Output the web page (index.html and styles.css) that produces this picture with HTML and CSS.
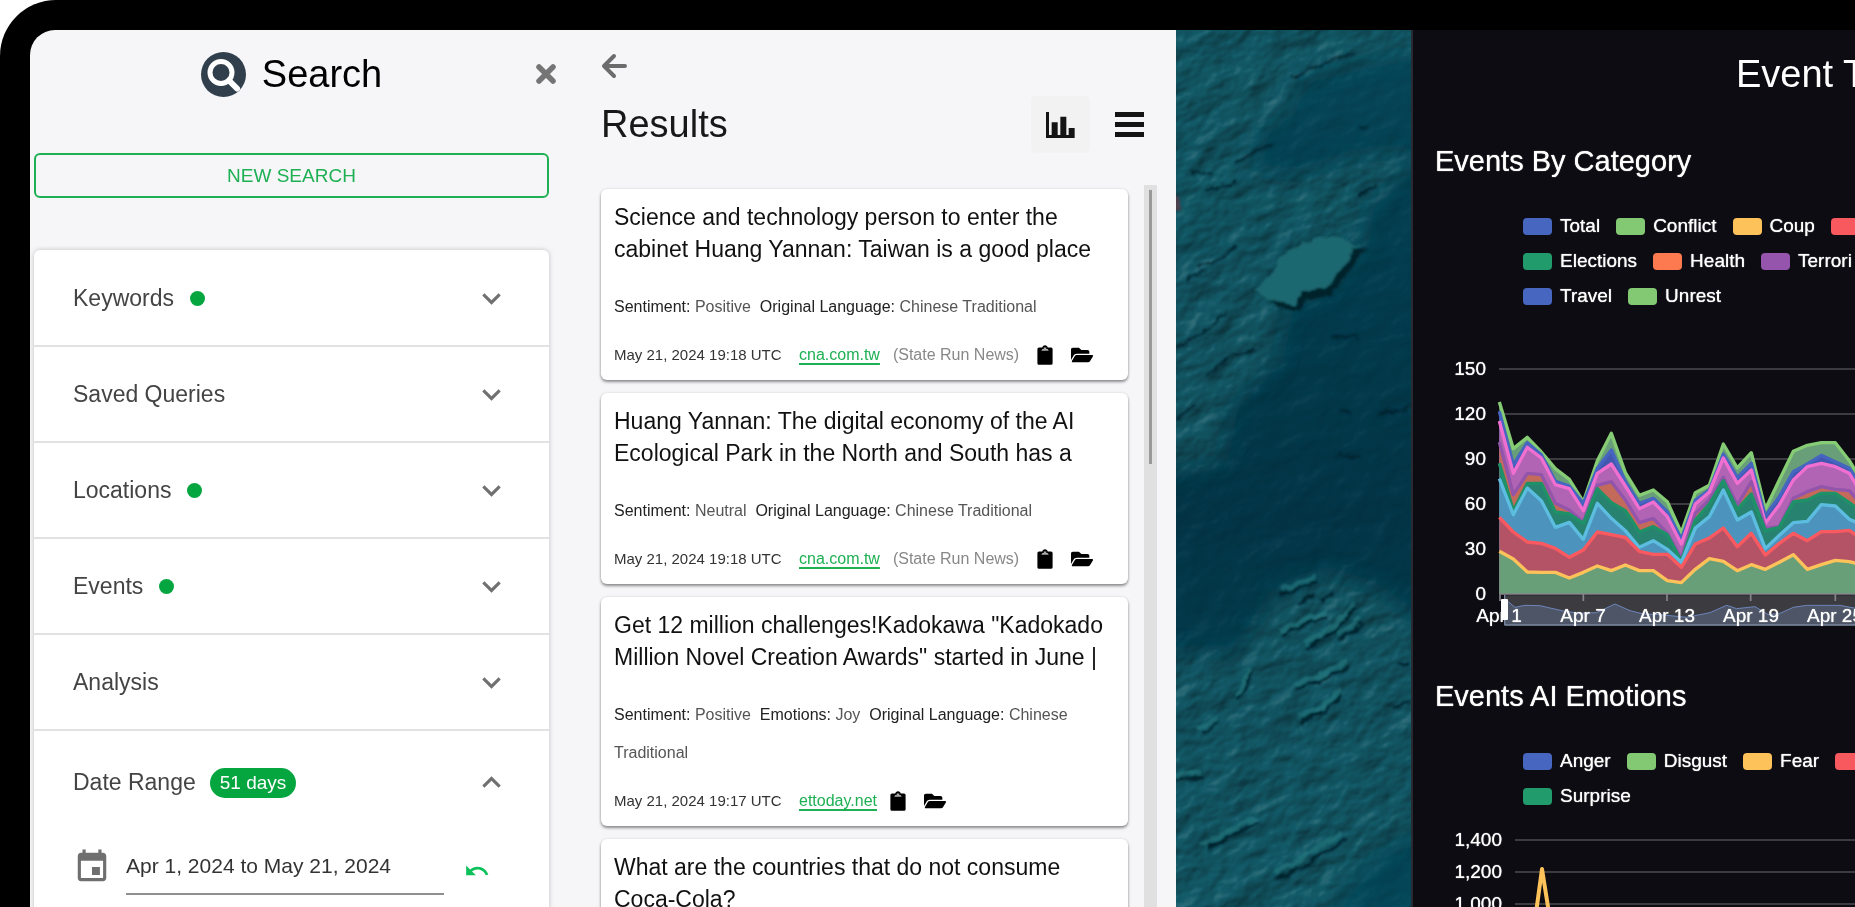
FILE: index.html
```html
<!DOCTYPE html>
<html lang="en">
<head>
<meta charset="utf-8">
<title>Event Search</title>
<link rel="stylesheet" href="styles.css">
</head>
<body>
<svg class="sprite" aria-hidden="true">
  <symbol id="i-down" viewBox="0 0 24 24"><path d="M7.41 8.59 12 13.17l4.59-4.58L18 10l-6 6-6-6z"/></symbol>
  <symbol id="i-up" viewBox="0 0 24 24"><path d="M7.41 15.41 12 10.83l4.59 4.58L18 14l-6-6-6 6z"/></symbol>
  <symbol id="i-clip" viewBox="0 0 16 20"><path d="M2 2.500H5.200C5.500 1.200 6.500 .2 8 .2s2.500 1 2.800 2.300H14a1.600 1.600 0 0 1 1.600 1.600v14.100A1.600 1.600 0 0 1 14 19.800H2A1.600 1.600 0 0 1 .4 18.200V4.100A1.600 1.600 0 0 1 2 2.500z"/><path d="M4.200 5.800h7.600L10.600 4H9.300V2.600H6.700V4H5.400z" fill="#aaa"/></symbol>
  <symbol id="i-folder" viewBox="0 0 576 512"><path d="M572.694 292.093L500.27 416.248A63.997 63.997 0 0 1 444.989 448H45.025c-18.523 0-30.064-20.093-20.731-36.093l72.424-124.155A64 64 0 0 1 152 256h399.964c18.523 0 30.064 20.093 20.73 36.093zM152 224h328v-48c0-26.51-21.49-48-48-48H272l-64-64H48C21.49 64 0 85.49 0 112v278.046l69.077-118.418C86.214 242.25 117.989 224 152 224z"/></symbol>
</svg>
<div class="device">
<main class="screen">

<section class="search">
  <header class="search__header">
    <h1 class="search__title">
      <svg class="search__logo" viewBox="0 0 45 45" aria-hidden="true"><circle cx="22.500" cy="22.500" r="22.500" fill="#313f4c"/><circle cx="20" cy="20.500" r="11" fill="none" stroke="#fff" stroke-width="5"/><path d="M28 28.500 36 36.500" stroke="#fff" stroke-width="6" stroke-linecap="round"/></svg>
      Search
    </h1>
    <button class="icon-button search__close" aria-label="Close"><svg width="20" height="20" viewBox="0 0 20 20"><path d="M3 3 17 17M17 3 3 17" stroke="#757575" stroke-width="5.500" stroke-linecap="round"/></svg></button>
  </header>
  <button class="search__new">NEW SEARCH</button>
  <div class="accordion">
    <button class="accordion__row">Keywords<span class="dot"></span><svg class="accordion__chevron"><use href="#i-down"/></svg></button>
    <button class="accordion__row">Saved Queries<svg class="accordion__chevron"><use href="#i-down"/></svg></button>
    <button class="accordion__row">Locations<span class="dot"></span><svg class="accordion__chevron"><use href="#i-down"/></svg></button>
    <button class="accordion__row">Events<span class="dot"></span><svg class="accordion__chevron"><use href="#i-down"/></svg></button>
    <button class="accordion__row">Analysis<svg class="accordion__chevron"><use href="#i-down"/></svg></button>
    <button class="accordion__row accordion__row--open" aria-expanded="true">Date Range<span class="badge">51 days</span><svg class="accordion__chevron"><use href="#i-up"/></svg></button>
    <div class="dates">
      <svg class="dates__icon" viewBox="0 0 24 24" aria-hidden="true"><path d="M17 12h-5v5h5v-5zM16 1v2H8V1H6v2H5c-1.110 0-1.990.9-1.990 2L3 19c0 1.100.89 2 2 2h14c1.100 0 2-.9 2-2V5c0-1.100-.9-2-2-2h-1V1h-2zm3 18H5V8h14v11z"/></svg>
      <input class="dates__input" type="text" aria-label="Date range" value="Apr 1, 2024 to May 21, 2024">
      <button class="icon-button dates__undo" aria-label="Reset dates"><svg width="26" height="26" viewBox="0 0 24 24"><path d="M12.500 8c-2.650 0-5.050.99-6.900 2.600L2 7v9h9l-3.620-3.620c1.390-1.160 3.160-1.880 5.120-1.880 3.540 0 6.550 2.310 7.600 5.500l2.370-.78C21.080 11.030 17.150 8 12.500 8z" fill="#0cc05a"/></svg></button>
    </div>
  </div>
</section>

<section class="results">
  <button class="icon-button results__back" aria-label="Back"><svg width="26" height="26" viewBox="0 0 26 26"><path d="M13 3 3 13 13 23M4 13H24" fill="none" stroke="#6c6c6c" stroke-width="4" stroke-linecap="round" stroke-linejoin="round"/></svg></button>
  <header class="results__header">
    <h2 class="results__title">Results</h2>
    <button class="results__chart" aria-label="Charts"><svg width="29" height="26" viewBox="0 0 87 78"><path d="M0 0H9V69H17V31H35V69H43V14H61V69H68V48H86V78H0z" fill="#141414"/></svg></button>
    <button class="icon-button" aria-label="Menu"><svg width="29" height="26" viewBox="0 0 29 26"><path d="M0 0H29V5H0zM0 10H29V15H0zM0 20H29V25H0z" fill="#141414"/></svg></button>
  </header>
  <div class="results__body">
    <div class="cards">
      <article class="card">
        <h3 class="card__title">Science and technology person to enter the cabinet Huang Yannan: Taiwan is a good place</h3>
        <p class="card__meta"><b>Sentiment:</b> Positive &nbsp;<b>Original Language:</b> Chinese Traditional</p>
        <footer class="card__footer"><time class="card__date">May 21, 2024 19:18 UTC</time><a class="card__link" href="#">cna.com.tw</a><span class="card__note">(State Run News)</span><button class="icon-button" aria-label="Copy"><svg class="clip"><use href="#i-clip"/></svg></button><button class="icon-button" aria-label="Open folder"><svg class="folder"><use href="#i-folder"/></svg></button></footer>
      </article>
      <article class="card">
        <h3 class="card__title">Huang Yannan: The digital economy of the AI Ecological Park in the North and South has a</h3>
        <p class="card__meta"><b>Sentiment:</b> Neutral &nbsp;<b>Original Language:</b> Chinese Traditional</p>
        <footer class="card__footer"><time class="card__date">May 21, 2024 19:18 UTC</time><a class="card__link" href="#">cna.com.tw</a><span class="card__note">(State Run News)</span><button class="icon-button" aria-label="Copy"><svg class="clip"><use href="#i-clip"/></svg></button><button class="icon-button" aria-label="Open folder"><svg class="folder"><use href="#i-folder"/></svg></button></footer>
      </article>
      <article class="card">
        <h3 class="card__title">Get 12 million challenges!Kadokawa "Kadokado Million Novel Creation Awards" started in June |</h3>
        <p class="card__meta"><b>Sentiment:</b> Positive &nbsp;<b>Emotions:</b> Joy &nbsp;<b>Original Language:</b> Chinese Traditional</p>
        <footer class="card__footer"><time class="card__date">May 21, 2024 19:17 UTC</time><a class="card__link" href="#">ettoday.net</a><button class="icon-button" aria-label="Copy"><svg class="clip"><use href="#i-clip"/></svg></button><button class="icon-button" aria-label="Open folder"><svg class="folder"><use href="#i-folder"/></svg></button></footer>
      </article>
      <article class="card">
        <h3 class="card__title">What are the countries that do not consume Coca-Cola?</h3>
      </article>
    </div>
    <div class="scrollbar"><div class="scrollbar__thumb"></div></div>
  </div>
</section>

<section class="map" aria-label="Map">
  <svg class="map__terrain" viewBox="0 0 234 877" preserveAspectRatio="xMidYMin slice">
    <defs>
      <filter id="soft" x="-20%" y="-20%" width="140%" height="140%"><feGaussianBlur stdDeviation="11"/></filter>
      <filter id="edge" x="-20%" y="-20%" width="140%" height="140%"><feTurbulence type="fractalNoise" baseFrequency=".08" numOctaves="3" seed="4"/><feDisplacementMap in="SourceGraphic" scale="9" xChannelSelector="R" yChannelSelector="G"/><feGaussianBlur stdDeviation="1"/></filter>
      <filter id="relief" x="0" y="0" width="100%" height="100%" color-interpolation-filters="sRGB">
        <feTurbulence type="fractalNoise" baseFrequency=".028 .042" numOctaves="4" seed="11"/>
        <feColorMatrix values="0 0 0 0 0  0 0 0 0 0  0 0 0 0 0  1 0 0 0 0"/>
        <feGaussianBlur stdDeviation=".8"/>
        <feDiffuseLighting surfaceScale="3" diffuseConstant=".6" lighting-color="#fff"><feDistantLight azimuth="250" elevation="50"/></feDiffuseLighting>
      </filter>
      <linearGradient id="sea" x1="0" y1="0" x2="0" y2="1"><stop offset="0" stop-color="#06485a"/><stop offset=".3" stop-color="#023c4e"/><stop offset=".55" stop-color="#023547"/><stop offset="1" stop-color="#04485a"/></linearGradient>
      <g id="shelf">
        <path d="M-30-30H270V15L130 45 110 85 85 100 78 140 120 145 180 125 240 120 225 145 190 175 185 215 155 255 110 275 100 330 55 375 45 430-30 445z"/>
        <path d="M-30 620 60 620 100 560 150 540 205 560 235 585 270 600V790L200 820 130 910H-30z"/>
      </g>
      <mask id="shelfMask" maskUnits="userSpaceOnUse" x="0" y="0" width="234" height="877"><rect width="234" height="877" fill="#444"/><use href="#shelf" fill="#fff" filter="url(#soft)"/></mask>
    </defs>
    <rect width="234" height="877" fill="url(#sea)"/>
    <use href="#shelf" fill="#125f6c" opacity=".8" filter="url(#soft)"/>
    <g class="map__relief" mask="url(#shelfMask)"><rect x="-500" y="-300" width="1200" height="1500" transform="rotate(-24 117 438)" filter="url(#relief)"/></g>
    <ellipse cx="1" cy="172" rx="4" ry="7" fill="#8b2d3a" opacity=".5" filter="url(#edge)"/>
    <g filter="url(#edge)">
      <path d="M84 264 100 274 123 280 130 267 153 264 170 244 188 216 180 217z" fill="#00222c"/>
      <path d="M78 260 97 240 108 220 130 210 160 205 178 215 183 212 165 238 150 258 125 261 118 274 95 270z" fill="#1d6871"/>
      <g fill="none" stroke="#267f86" stroke-width="5" opacity=".6">
        <path d="M103 558Q118 551 138 544M103 598Q125 588 148 580M130 610 158 592 178 570M160 601Q175 598 183 584M120 652 170 630M123 684 148 672 164 656M60 662 74 636M22 694 43 684M0 742 26 739M25 812 78 785M98 840 165 800"/>
      </g>
      <g fill="none" stroke="#00222d" stroke-width="3">
        <path d="M103 563Q118 556 140 549M120 572 138 562M145 568 158 560M103 603Q125 593 150 585M130 616 158 598 180 575M160 607Q175 604 185 590M120 657 172 635M123 690 148 678 166 661M62 668 76 640M25 700 45 689M0 748 28 744M30 815 80 790M100 846 170 806M215 675 232 668M222 630 234 630"/>
        <path d="M115 48 135 38 180 22M180 98 192 97M160 422 183 427M165 378 175 382M200 382 225 378 234 372M15 140 35 142M0 388 20 372M155 305 180 306M30 160 60 150M20 235 45 228 60 215M10 250 28 240M180 165 200 155M60 132 95 112M0 315 30 300 50 280M30 345 55 325 80 318" stroke-width="2"/>
      </g>
    </g>
  </svg>
</section>

<section class="trends">
  <h2 class="trends__title">Event T</h2>

  <h3 class="trends__heading">Events By Category</h3>
  <ul class="legend">
    <li class="legend__row"><span class="key key--blue">Total</span><span class="key key--green">Conflict</span><span class="key key--yellow">Coup</span><span class="key key--red"></span></li>
    <li class="legend__row"><span class="key key--teal">Elections</span><span class="key key--orange">Health</span><span class="key key--purple">Terrori</span></li>
    <li class="legend__row"><span class="key key--blue">Travel</span><span class="key key--green">Unrest</span></li>
  </ul>
  <svg class="chart" height="327" role="img" aria-label="Events by category, stacked by day">
    <g stroke="#3b3b40" stroke-width="2"><path d="M86 64H900M86 109H900M86 154H900M86 199H900M86 244H900"/></g>
    <g transform="translate(-13 35) scale(.33333)" stroke-width="10" stroke-linejoin="round">
      <path d="M314 766H1500V856H314z" fill="#3c3c40"/>
      <path d="M314 856V776L345 802 375 796 420 797 450 804 490 813 540 820 590 818 645 792 690 812 730 822 780 824 860 832 930 818 980 796 1010 806 1065 800 1105 824 1140 820 1180 802 1220 796 1320 796 1350 802 1400 810V856z" fill="#4d5566" stroke="none"/>
      <path d="M314 776 345 802 375 796 420 797 450 804 490 813 540 820 590 818 645 792 690 812 730 822 780 824 860 832 930 818 980 796 1010 806 1065 800 1105 824 1140 820 1180 802 1220 796 1320 796 1350 802 1400 810" fill="none" stroke="#6d86bd" stroke-width="3"/>
      <path d="M314 855H1500M314 764V856" fill="none" stroke="#78869f" stroke-width="4"/>
      <g id="bands"></g>
      <path d="M298 762H1500M300 762V783M550 762V783M801 762V783M1052 762V783M1306 762V783" fill="none" stroke="#85858c" stroke-width="5"/>
    </g>
    <g class="chart__labels chart__labels--y"><text x="73" y="70">150</text><text x="73" y="115">120</text><text x="73" y="160">90</text><text x="73" y="205">60</text><text x="73" y="250">30</text><text x="73" y="295">0</text></g>
    <g class="chart__labels chart__labels--x"><text x="86" y="317">Apr 1</text><text x="170" y="317">Apr 7</text><text x="254" y="317">Apr 13</text><text x="338" y="317">Apr 19</text><text x="422" y="317">Apr 25</text></g>
    <rect x="88" y="294" width="7" height="21" rx="1" fill="#fff"/>
  </svg>

  <h3 class="trends__heading">Events AI Emotions</h3>
  <ul class="legend">
    <li class="legend__row"><span class="key key--blue">Anger</span><span class="key key--green">Disgust</span><span class="key key--yellow">Fear</span><span class="key key--red"></span></li>
    <li class="legend__row"><span class="key key--teal">Surprise</span></li>
  </ul>
  <svg class="chart" height="327" role="img" aria-label="Events by emotion, per day">
    <path d="M102 35H900M102 67H900M102 99H900" stroke="#3b3b40" stroke-width="2"/>
    <path d="M116 160 123 108 129 64 136 108 143 160" fill="none" stroke="#fdc25a" stroke-width="4" stroke-linejoin="round"/>
    <g class="chart__labels chart__labels--y"><text x="89" y="41">1,400</text><text x="89" y="73">1,200</text><text x="89" y="105">1,000</text></g>
  </svg>
</section>

</main>
</div>
<script src="chart.js"></script>
</body>
</html>
```
FILE: styles.css
```css
* { box-sizing: border-box; }

body {
  margin: 0;
  height: 100vh;
  overflow: hidden;
  background: #fff;
  font-family: "Liberation Sans", Arial, sans-serif;
  color: #111;
}

h1, h2, h3, p, ul { margin: 0; padding: 0; font-weight: 400; }
ul { list-style: none; }
svg { display: block; flex: none; }
button { font: inherit; color: inherit; cursor: pointer; }

.sprite { position: absolute; width: 0; height: 0; }

.device {
  height: 100%;
  padding: 30px 0 0 30px;
  background: #000;
  border-top-left-radius: 56px;
}

.screen {
  display: grid;
  grid-template-columns: minmax(0, 551fr) minmax(0, 595fr) minmax(0, 235fr) minmax(0, 444fr);
  height: 100%;
  overflow: hidden;
  background: #f6f6f9;
  border-top-left-radius: 25px;
}

.screen > section { min-height: 0; overflow: hidden; }

.icon-button {
  display: inline-flex;
  align-items: center;
  padding: 0;
  border: 0;
  background: none;
}

/* Search panel */
.search { padding: 20px 32px 0 4px; }

.search__header {
  display: grid;
  grid-template-columns: 1fr auto 1fr;
  align-items: center;
  height: 46px;
}

.search__title {
  grid-column: 2;
  display: flex;
  align-items: center;
  gap: 16px;
  font-size: 38px;
  line-height: 48px;
  color: #000;
}

.search__logo { width: 45px; height: 45px; }
.search__close { justify-self: end; margin-right: -7px; }

.search__new {
  width: 100%;
  height: 45px;
  margin: 57px 0 52px;
  border: 2px solid #1eb053;
  border-radius: 6px;
  background: none;
  color: #1eb053;
  font-size: 19px;
}

.accordion {
  height: 900px;
  padding-top: 1px;
  border-radius: 6px 6px 0 0;
  background: #fff;
  box-shadow: 0 0 5px rgba(0, 0, 0, .22);
}

.accordion__row {
  display: flex;
  align-items: center;
  width: 100%;
  height: 96px;
  padding: 0 39px;
  border: 0;
  border-bottom: 2px solid #e2e2e3;
  background: none;
  color: #444;
  font-size: 23px;
}

.accordion__row--open { height: 103px; border-bottom: 0; }

.accordion__chevron { width: 37px; height: 37px; margin-left: auto; fill: #707070; }

.dot {
  width: 15px;
  height: 15px;
  margin-left: 16px;
  border-radius: 50%;
  background: #05a540;
}

.badge {
  height: 30px;
  margin-left: 14px;
  padding: 0 10px;
  border-radius: 15px;
  background: #05a540;
  color: #fff;
  font-size: 19px;
  line-height: 30px;
}

.dates {
  display: flex;
  align-items: center;
  padding: 1px 59px 0 39px;
}

.dates__icon { width: 38px; height: 38px; margin: 4px 15px 0 0; fill: #6f6f6f; }

.dates__input {
  flex: 1;
  min-width: 0;
  height: 60px;
  padding: 4px 0 0;
  border: 0;
  border-bottom: 2px solid #8f8f8f;
  background: none;
  color: #333;
  font: inherit;
  font-size: 21px;
}

.dates__undo { margin: 12px 0 0 20px; }

/* Results panel */
.results {
  display: flex;
  flex-direction: column;
  padding: 20px 19px 0 20px;
}

.results__back { height: 32px; }

.results__header {
  display: flex;
  align-items: center;
  gap: 25px;
  height: 57px;
  margin: 14px 0 32px;
  padding-right: 13px;
}

.results__title { flex: 1; font-size: 38px; color: #181818; }

.results__chart {
  display: flex;
  align-items: center;
  justify-content: center;
  width: 59px;
  height: 57px;
  padding: 0;
  border: 0;
  border-radius: 5px;
  background: #f2f2f2;
}

.results__body {
  display: flex;
  flex: 1;
  gap: 16px;
  min-height: 0;
}

.cards {
  display: flex;
  flex: 1;
  flex-direction: column;
  gap: 13px;
  min-width: 0;
  padding-top: 4px;
}

.card {
  flex: none;
  padding: 12px 13px 6px;
  border-radius: 6px;
  background: #fff;
  box-shadow: 0 2px 3px rgba(0, 0, 0, .42), 0 0 3px rgba(0, 0, 0, .1);
}

.card__title { font-size: 23px; line-height: 32px; }

.card__meta {
  margin: 23px 0 10px;
  color: #555;
  font-size: 16px;
  line-height: 38px;
}

.card__meta b { font-weight: 400; color: #222; }

.card__footer {
  display: flex;
  align-items: center;
  gap: 13px;
  font-size: 16px;
  line-height: 38px;
}

.card__date { min-width: 172px; font-size: 15px; color: #333; }
.card__link { color: #1eb053; text-decoration-thickness: 2px; text-underline-offset: 3px; }
.card__note { margin-right: 5px; color: #888; }

.clip { width: 16px; height: 20px; }
.folder { width: 22px; height: 20px; margin-left: 5px; }

.scrollbar {
  width: 13px;
  padding: 5px 5px 0;
  background: #e0e0e1;
}

.scrollbar__thumb { height: 274px; background: #999; }

/* Map */
.map { background: #023c4e; }
.map__terrain { width: 100%; height: 100%; }
.map__relief { mix-blend-mode: hard-light; }

/* Trends panel */
.trends {
  border-left: 2px solid #292b32;
  background: #0d0c12;
  color: #fff;
  white-space: nowrap;
}

.trends__title {
  margin-top: 21px;
  padding-left: 323px;
  font-size: 38px;
  line-height: 46px;
}

.trends__heading {
  margin-top: 46px;
  padding-left: 22px;
  font-size: 29px;
  line-height: 36px;
  text-shadow: 0 0 1px #fff;
}

.legend {
  display: grid;
  gap: 17px;
  padding: 38px 0 0 110px;
  font-size: 19px;
  line-height: 18px;
  text-shadow: 0 0 1px #fff;
}

.legend__row { display: flex; gap: 16px; height: 18px; }

.key { display: flex; align-items: center; gap: 8px; }

.key::before {
  content: "";
  width: 29px;
  height: 17px;
  border-radius: 4px;
  background: var(--key);
}

.key--blue { --key: #4766c0; }
.key--green { --key: #83c974; }
.key--yellow { --key: #fdc25a; }
.key--red { --key: #f7595f; }
.key--teal { --key: #229b6c; }
.key--orange { --key: #fd7a50; }
.key--purple { --key: #9655ac; }

.chart { width: 100%; }

.chart__labels {
  fill: #fff;
  font-size: 19px;
  text-shadow: 0 0 1px #fff;
}

.chart__labels--y { text-anchor: end; }
.chart__labels--x { text-anchor: middle; }
```
FILE: chart.js
```js
// Stacked bands, topmost first: each one is painted down to the axis,
// so the next band covers its lower part.
const AXIS = 762;
const START = 298;
const STEP = 42;

const bands = [
  { fill: "#699f78", line: "#85cc74", y: [186,326,292,336,386,418,486,362,280,398,466,450,485,578,458,436,312,384,338,508,420,334,316,308,308,362,430] },
  { fill: "#4058b0", line: "#4565c0", y: [214,375,308,344,424,438,490,385,330,425,490,475,515,597,480,450,342,412,370,528,470,395,372,346,365,385,450] },
  { fill: "#b164b4", line: "#f06fd0", y: [243,400,322,354,434,446,512,400,372,438,506,486,530,612,492,456,354,430,390,550,494,420,380,370,380,400,470] },
  { fill: "#c46a5a", line: "#9355ab", y: [306,464,400,404,490,510,546,436,425,480,548,535,580,656,520,480,412,495,425,565,560,475,455,440,448,452,500] },
  { fill: "#288270", line: "#1f9168", y: [370,512,430,430,516,522,550,446,488,512,576,560,584,664,540,492,422,508,462,572,562,486,480,460,460,488,520] },
  { fill: "#4c94be", line: "#5cbde0", y: [416,524,444,482,562,547,598,490,535,572,622,602,628,667,564,530,450,540,516,626,586,548,544,494,498,538,555] },
  { fill: "#b55366", line: "#fa5a5f", y: [532,576,606,610,625,652,630,576,584,592,634,643,643,682,612,594,564,620,580,645,610,580,602,575,575,571,600] },
  { fill: "#699f78", line: "#fdc25a", y: [634,657,696,697,697,714,697,678,692,675,692,692,722,728,688,656,664,692,674,688,667,644,688,674,661,665,675] }
];

const group = document.getElementById("bands");

function addPath(attributes) {
  const path = document.createElementNS("http://www.w3.org/2000/svg", "path");
  for (const [name, value] of Object.entries(attributes)) path.setAttribute(name, value);
  group.append(path);
}

for (const band of bands) {
  const line = "M" + band.y.map((y, i) => `${START + i * STEP} ${y}`).join("L");
  const end = START + (band.y.length - 1) * STEP;
  addPath({ d: `${line}L${end} ${AXIS}L${START} ${AXIS}z`, fill: band.fill });
  addPath({ d: line, fill: "none", stroke: band.line });
}
```
